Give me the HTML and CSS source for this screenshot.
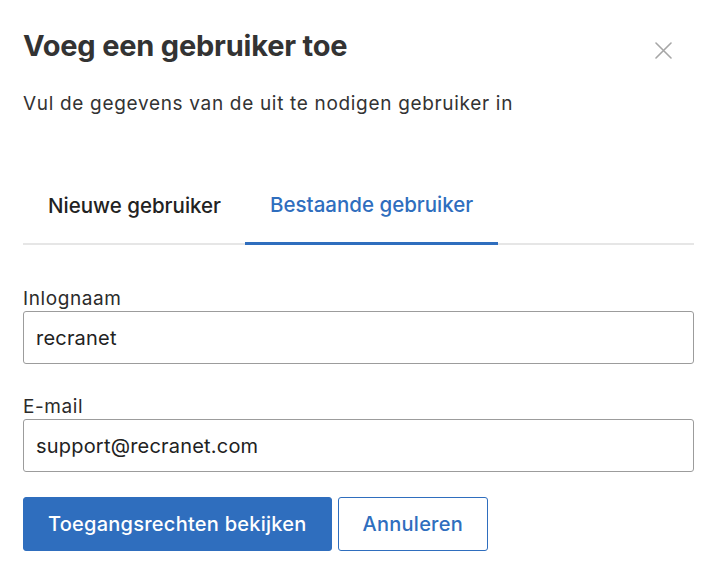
FILE: index.html
```html
<!DOCTYPE html>
<html lang="nl">
<head>
<meta charset="utf-8">
<title>Voeg een gebruiker toe</title>
<link rel="stylesheet" href="styles.css">
</head>
<body>
<div class="dialog">
  <header class="head">
    <h1 class="title">Voeg een gebruiker toe</h1>
    <button class="close" type="button" aria-label="Sluiten">
      <svg width="17" height="17" viewBox="0 0 17 17"><path d="M1 1L16 16M16 1L1 16" stroke="#a6a6a6" stroke-width="1.6" fill="none" stroke-linecap="round"/></svg>
    </button>
  </header>
  <p class="sub">Vul de gegevens van de uit te nodigen gebruiker in</p>
  <nav class="tabs">
    <button class="tab" type="button">Nieuwe gebruiker</button>
    <button class="tab active" type="button">Bestaande gebruiker</button>
  </nav>
  <form class="form">
    <div class="field">
      <label class="label" for="login">Inlognaam</label>
      <input class="input" id="login" type="text" value="recranet">
    </div>
    <div class="field">
      <label class="label" for="mail">E-mail</label>
      <input class="input" id="mail" type="text" value="support@recranet.com">
    </div>
    <div class="actions">
      <button class="btn primary" type="button">Toegangsrechten bekijken</button>
      <button class="btn secondary" type="button">Annuleren</button>
    </div>
  </form>
</div>
</body>
</html>
```
FILE: styles.css
```css
* { box-sizing: border-box; }
html, body { margin: 0; padding: 0; background: #fff; }
body { font-family: Inter, "Noto Sans", "Liberation Sans", sans-serif; color: #262626; }
.dialog { padding: 29px 22px 0 23px; }
.head { display: flex; justify-content: space-between; align-items: flex-start; }
.title { margin: 0; font-size: 29px; line-height: 34px; font-weight: 700; color: #333; letter-spacing: -0.2px; }
.close { border: 0; background: none; padding: 0; margin: 13px 22px 0 0; width: 17px; height: 17px; display: block; cursor: pointer; }
.close svg { display: block; }
.sub { margin: 29px 0 0; font-size: 19px; line-height: 24px; color: #333; letter-spacing: 0.68px; }
.tabs { display: flex; margin-top: 77px; border-bottom: 2px solid #e6e6e6; }
.tab { font-family: inherit; font-size: 20.5px; line-height: 24px; font-weight: 500; color: #222; background: none; border: 0; padding: 0 24px 25px 25px; margin: 0; cursor: pointer; }
.tab.active { color: #2f6ebe; border-bottom: 3px solid #2f6ebe; margin-bottom: -2px; padding-right: 25px; }
.form { margin-top: 44px; }
.field + .field { margin-top: 33px; }
.label { display: block; font-size: 19px; line-height: 20px; color: #2b2b2b; margin-bottom: 2px; letter-spacing: 0.6px; }
.input { display: block; width: 100%; height: 53px; border: 1px solid #9c9c9c; border-radius: 3px; padding: 0 12px; font-family: inherit; font-size: 20px; letter-spacing: 0.2px; color: #222; background: #fff; }
.actions { display: flex; gap: 6px; margin-top: 25px; }
.btn { font-family: inherit; font-size: 20px; font-weight: 500; letter-spacing: 0.25px; height: 54px; border-radius: 3px; padding: 0 24px; cursor: pointer; }
.primary { background: #2f6ebe; color: #fff; border: 1px solid #2f6ebe; }
.secondary { background: #fff; color: #2f6ebe; border: 1px solid #2f6ebe; }
```
